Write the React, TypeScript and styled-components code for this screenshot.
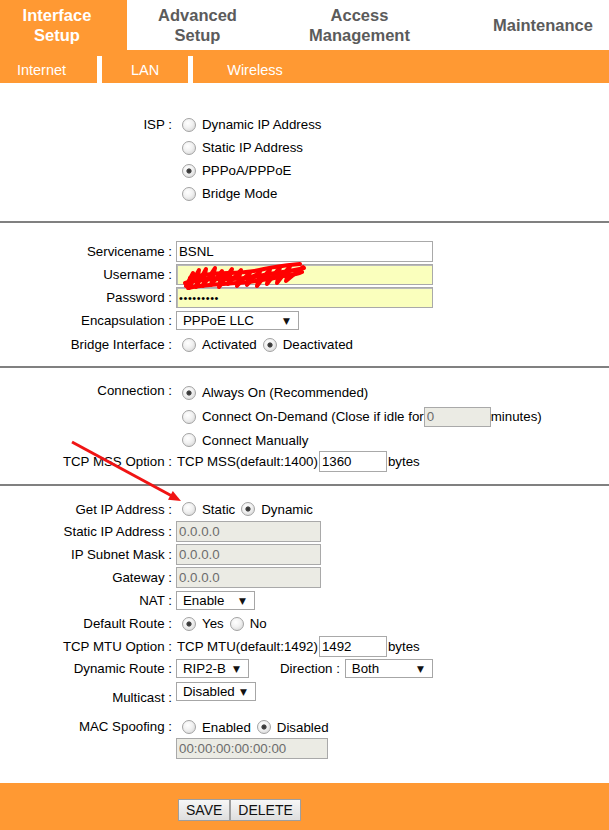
import styled, { createGlobalStyle } from "styled-components";

const ORANGE = "#ff9933";
const TEXT_SIZE = "13.3px";

const GlobalStyle = createGlobalStyle`
  body {
    margin: 0;
    background: #ffffff;
    font-family: "Liberation Sans", Arial, sans-serif;
  }
`;

export default function App() {
  return (
    <Page>
      <GlobalStyle />
      <TopTabs>
        <TopTab $active $shift={-13}>
          Interface
          <br />
          Setup
        </TopTab>
        <TopTab>
          Advanced
          <br />
          Setup
        </TopTab>
        <TopTab>
          Access
          <br />
          Management
        </TopTab>
        <TopTab $shift={26}>Maintenance</TopTab>
      </TopTabs>
      <SubNav>
        <SubItem $w={97} $shift={-14}>
          Internet
        </SubItem>
        <SubSep />
        <SubItem $w={86}>LAN</SubItem>
        <SubSep />
        <SubItem $w={124}>Wireless</SubItem>
      </SubNav>

      <Section $top={30} $bottom={16}>
        <FieldRow $top>
          <Label $lh={23}>ISP :</Label>
          <Stack>
            <Line $h={23}>
              <Radio />
              Dynamic IP Address
            </Line>
            <Line $h={23}>
              <Radio />
              Static IP Address
            </Line>
            <Line $h={23}>
              <Radio $checked />
              PPPoA/PPPoE
            </Line>
            <Line $h={23}>
              <Radio />
              Bridge Mode
            </Line>
          </Stack>
        </FieldRow>
      </Section>
      <Divider />

      <Section $top={17} $bottom={9}>
        <FieldRow $h={23}>
          <Label>Servicename :</Label>
          <Line>
            <Field $w={257} readOnly value="BSNL" />
          </Line>
        </FieldRow>
        <FieldRow $h={23}>
          <Label>Username :</Label>
          <Line>
            <Masked>
              <Field $w={257} $tone="yellow" readOnly value="" />
              <Scribble width="130" height="32" viewBox="0 -4 130 32">
                <path d="M6 22 L13 9 L9 24 L19 6 L16 23 L26 5 L23 22 L35 4 L31 21 L42 7 L39 23 L52 5 L48 20 L61 6 L57 22 L70 8 L67 21 L80 7 L77 22 L90 5 L87 20 L100 3 L97 19 L110 2 L106 17 L123 3" />
                <path d="M5 19 C30 12 52 18 78 12 C96 8 110 8 124 4" />
                <path d="M10 14 C34 6 58 12 84 5 C98 2 110 1 120 0" />
                <path d="M8 24 C30 18 60 22 92 14 C104 11 114 12 122 8" />
                <path d="M40 10 C52 16 66 16 76 11 C84 16 94 16 104 10" />
              </Scribble>
            </Masked>
          </Line>
        </FieldRow>
        <FieldRow $h={23}>
          <Label>Password :</Label>
          <Line>
            <Field $w={257} $tone="yellow" $small readOnly value="•••••••••" />
          </Line>
        </FieldRow>
        <FieldRow $h={23}>
          <Label>Encapsulation :</Label>
          <Line>
            <Select $w={123}>
              PPPoE LLC
              <Arrow>▼</Arrow>
            </Select>
          </Line>
        </FieldRow>
        <FieldRow $h={25}>
          <Label>Bridge Interface :</Label>
          <Line>
            <Radio />
            Activated
            <Radio $checked />
            Deactivated
          </Line>
        </FieldRow>
      </Section>
      <Divider />

      <Section $top={13} $bottom={12}>
        <FieldRow $top>
          <Label $lh={20}>Connection :</Label>
          <Stack>
            <Line $h={23}>
              <Radio $checked />
              Always On (Recommended)
            </Line>
            <Line $h={25}>
              <Radio />
              Connect On-Demand (Close if idle for
              <Field $w={67} $h={20} $tone="gray" readOnly value="0" />
              minutes)
            </Line>
            <Line $h={22}>
              <Radio />
              Connect Manually
            </Line>
          </Stack>
        </FieldRow>
        <FieldRow $h={21}>
          <Label>TCP MSS Option :</Label>
          <Line>
            <Plain>TCP MSS(default:1400)</Plain>
            <Field $w={68} readOnly value="1360" />
            <Plain>bytes</Plain>
          </Line>
        </FieldRow>
      </Section>
      <Divider />

      <Section $top={12} $bottom={24}>
        <FieldRow $h={22}>
          <Label>Get IP Address :</Label>
          <Line>
            <Radio />
            Static
            <Radio $checked />
            Dynamic
          </Line>
        </FieldRow>
        <FieldRow $h={23}>
          <Label>Static IP Address :</Label>
          <Line>
            <Field $w={145} $tone="gray" readOnly value="0.0.0.0" />
          </Line>
        </FieldRow>
        <FieldRow $h={23}>
          <Label>IP Subnet Mask :</Label>
          <Line>
            <Field $w={145} $tone="gray" readOnly value="0.0.0.0" />
          </Line>
        </FieldRow>
        <FieldRow $h={23}>
          <Label>Gateway :</Label>
          <Line>
            <Field $w={145} $tone="gray" readOnly value="0.0.0.0" />
          </Line>
        </FieldRow>
        <FieldRow $h={23}>
          <Label>NAT :</Label>
          <Line>
            <Select $w={79}>
              Enable
              <Arrow>▼</Arrow>
            </Select>
          </Line>
        </FieldRow>
        <FieldRow $h={23}>
          <Label>Default Route :</Label>
          <Line>
            <Radio $checked />
            Yes
            <Radio />
            No
          </Line>
        </FieldRow>
        <FieldRow $h={22}>
          <Label>TCP MTU Option :</Label>
          <Line>
            <Plain>TCP MTU(default:1492)</Plain>
            <Field $w={68} readOnly value="1492" />
            <Plain>bytes</Plain>
          </Line>
        </FieldRow>
        <FieldRow $h={23}>
          <Label>Dynamic Route :</Label>
          <Line>
            <Select $w={73}>
              RIP2-B
              <Arrow>▼</Arrow>
            </Select>
            <InlineLabel>Direction :</InlineLabel>
            <Select $w={88}>
              Both
              <Arrow>▼</Arrow>
            </Select>
          </Line>
        </FieldRow>
        <FieldRow $h={34}>
          <Label>Multicast :</Label>
          <TopLine>
            <Select $w={80}>
              Disabled
              <Arrow>▼</Arrow>
            </Select>
          </TopLine>
        </FieldRow>
        <FieldRow $top $pad={2}>
          <Label $lh={22}>MAC Spoofing :</Label>
          <Stack>
            <Line $h={22}>
              <Radio />
              Enabled
              <Radio $checked />
              Disabled
            </Line>
            <Field $w={152} $tone="gray" readOnly value="00:00:00:00:00:00" />
          </Stack>
        </FieldRow>
      </Section>

      <Footer>
        <Button>SAVE</Button>
        <Button>DELETE</Button>
      </Footer>

      <Pointer width="609" height="830" viewBox="0 0 609 830">
        <line x1="72" y1="442" x2="171" y2="495.5" />
        <polygon points="181,501 168,499.7 172.8,490.9" />
      </Pointer>
    </Page>
  );
}

const Page = styled.div`
  position: relative;
  width: 609px;
  min-height: 830px;
  color: #000;
  font-size: ${TEXT_SIZE};
`;

const TopTabs = styled.div`
  display: grid;
  grid-template-columns: 127px 141px 183px 1fr;
  height: 50px;
`;

const TopTab = styled.div<{ $active?: boolean; $shift?: number }>`
  display: flex;
  align-items: center;
  justify-content: center;
  padding-left: ${(p) => Math.max(p.$shift ?? 0, 0)}px;
  padding-right: ${(p) => Math.max(-(p.$shift ?? 0), 0)}px;
  text-align: center;
  font-size: 16.5px;
  font-weight: bold;
  line-height: 20px;
  color: ${(p) => (p.$active ? "#ffffff" : "#5b5b5b")};
  background: ${(p) => (p.$active ? ORANGE : "#ffffff")};
`;

const SubNav = styled.div`
  display: flex;
  height: 33px;
  box-sizing: border-box;
  padding-top: 6px;
  background: ${ORANGE};
`;

const SubItem = styled.div<{ $w: number; $shift?: number }>`
  display: flex;
  align-items: center;
  justify-content: center;
  width: ${(p) => p.$w}px;
  box-sizing: border-box;
  padding-right: ${(p) => Math.max(-(p.$shift ?? 0), 0)}px;
  font-size: 14.5px;
  color: #ffffff;
`;

const SubSep = styled.div`
  width: 5px;
  background: #ffffff;
`;

const Section = styled.div<{ $top: number; $bottom: number }>`
  padding: ${(p) => p.$top}px 0 ${(p) => p.$bottom}px;
`;

const Divider = styled.div`
  height: 2px;
  background: #808080;
`;

const FieldRow = styled.div<{ $h?: number; $top?: boolean; $pad?: number }>`
  display: grid;
  grid-template-columns: 172px 1fr;
  column-gap: 4px;
  align-items: ${(p) => (p.$top ? "start" : "center")};
  height: ${(p) => (p.$h ? `${p.$h}px` : "auto")};
  padding-top: ${(p) => p.$pad ?? 0}px;
`;

const Label = styled.div<{ $lh?: number }>`
  text-align: right;
  white-space: nowrap;
  line-height: ${(p) => (p.$lh ? `${p.$lh}px` : "normal")};
`;

const InlineLabel = styled.span`
  margin: 0 5px 0 31px;
  white-space: nowrap;
`;

const Stack = styled.div`
  display: flex;
  flex-direction: column;
  align-items: flex-start;
`;

const Line = styled.div<{ $h?: number }>`
  display: flex;
  align-items: center;
  white-space: nowrap;
  height: ${(p) => (p.$h ? `${p.$h}px` : "auto")};
`;

const TopLine = styled.div`
  display: flex;
  align-self: start;
  margin-top: 2px;
`;

const Plain = styled.span`
  padding: 0 1px;
`;

const Radio = styled.span<{ $checked?: boolean }>`
  display: inline-block;
  flex: none;
  width: 14px;
  height: 14px;
  margin: 0 6px 0 6px;
  box-sizing: border-box;
  border-radius: 50%;
  border: 1px solid #a3a3a3;
  background: ${(p) =>
    p.$checked
      ? "radial-gradient(circle at 50% 50%, #2e2e2e 0, #4a4a4a 2.2px, rgba(0,0,0,0) 3px), radial-gradient(circle at 40% 35%, #ffffff 0%, #f1f1f1 45%, #cfcfcf 100%)"
      : "radial-gradient(circle at 40% 35%, #ffffff 0%, #f1f1f1 45%, #cfcfcf 100%)"};
`;

const tones = {
  white: "#ffffff",
  yellow: "#faffbd",
  gray: "#ebebe4",
};

const Field = styled.input<{
  $w: number;
  $h?: number;
  $tone?: keyof typeof tones;
  $small?: boolean;
}>`
  display: block;
  width: ${(p) => p.$w}px;
  height: ${(p) => p.$h ?? 21}px;
  box-sizing: border-box;
  margin: 0;
  padding: 0 2px;
  font-family: "Liberation Sans", Arial, sans-serif;
  font-size: ${(p) => (p.$small ? "11px" : TEXT_SIZE)};
  letter-spacing: ${(p) => (p.$small ? "0.6px" : "normal")};
  color: ${(p) => (p.$tone === "gray" ? "#6d6d6d" : "#000000")};
  background: ${(p) => tones[p.$tone ?? "white"]};
  border: 1px solid #a9a9a9;
  box-shadow: ${(p) => (p.$tone === "yellow" ? "inset 1px 1px 0 #b9b9b9" : "none")};
  outline: none;
`;

const Masked = styled.div`
  position: relative;
`;

const Scribble = styled.svg`
  position: absolute;
  left: 4px;
  top: -4px;
  fill: none;
  stroke: #ff0000;
  stroke-width: 4;
  stroke-linecap: round;
  stroke-linejoin: round;
`;

const Select = styled.div<{ $w: number }>`
  display: flex;
  align-items: center;
  justify-content: space-between;
  width: ${(p) => p.$w}px;
  height: 19px;
  box-sizing: border-box;
  padding: 0 8px 0 6px;
  background: #ffffff;
  border: 1px solid #a6a6a6;
  font-size: ${TEXT_SIZE};
  white-space: nowrap;
`;

const Arrow = styled.span`
  font-family: "DejaVu Sans", sans-serif;
  font-size: 9px;
  color: #111;
`;

const Footer = styled.div`
  display: flex;
  height: 47px;
  box-sizing: border-box;
  padding: 16px 0 0 178px;
  background: ${ORANGE};
`;

const Button = styled.button`
  height: 22px;
  padding: 0 7px;
  margin: 0;
  font-family: "Liberation Sans", Arial, sans-serif;
  font-size: 14px;
  color: #111;
  background: linear-gradient(#f7f7f7, #dedede);
  border: 1px solid #9e9e9e;
  border-radius: 0;
`;

const Pointer = styled.svg`
  position: absolute;
  left: 0;
  top: 0;
  pointer-events: none;
  line {
    stroke: #f01414;
    stroke-width: 3;
  }
  polygon {
    fill: #f01414;
  }
`;
